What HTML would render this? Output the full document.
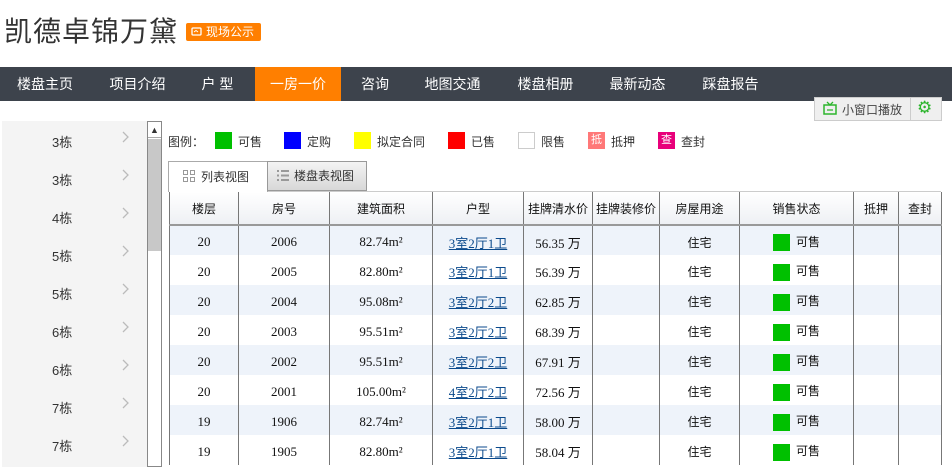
<!DOCTYPE html>
<html><head><meta charset="utf-8"><style>
*{margin:0;padding:0;box-sizing:border-box}
body{width:952px;height:467px;overflow:hidden;background:#fff;font-family:"Liberation Sans","Noto Sans CJK SC",sans-serif;font-size:12px;color:#333;position:relative}
.abs{position:absolute}
.title{left:4px;top:10px;font-size:28px;color:#333;font-family:"Liberation Sans","Noto Sans CJK SC",sans-serif;letter-spacing:1px}
.badge{left:186px;top:23px;width:75px;height:18px;background:#ff7f00;border-radius:2px;color:#fff;font-size:12px;line-height:18px;padding-left:20px}
.nav{left:0;top:67px;width:952px;height:34px;background:#3d434c}
.nav span{position:absolute;top:0;height:34px;line-height:34px;color:#fff;font-size:14px;text-align:center}
.side{left:2px;top:121px;width:145px;height:346px;background:#f4f4f4}
.side div{position:absolute;left:50px;font-size:13px;color:#333}
.side svg{position:absolute;left:120px}
table{position:absolute;left:169px;top:192px;border-collapse:collapse;font-size:12px;color:#111;table-layout:fixed}
td,th{border-left:1px solid #777;border-right:1px solid #777;text-align:center;font-weight:normal;height:30px;padding:3px 0 0 0;white-space:nowrap}
td{font-family:"Liberation Serif","Noto Sans CJK SC",serif;font-size:13px}
td.c{font-family:"Liberation Sans","Noto Sans CJK SC",sans-serif;font-size:12px}
th{height:33px;background:linear-gradient(#fff,#eef0f4);border-bottom:2px solid #999;font-size:12px;padding:0}
tr.a td{background:#eef3fa}
a{color:#0b4a8c;text-decoration:underline}
.g{display:inline-block;width:17px;height:17px;background:#00c000;vertical-align:middle;margin-right:6px}
</style></head><body>
<div class="abs title">凯德卓锦万黛</div>
<div class="abs badge"><svg class="abs" style="left:5px;top:4px" width="11" height="10"><rect x="1" y="1" width="9" height="7" rx="1" fill="none" stroke="#fff" stroke-width="1.3"/><path d="M3 5l2-1.5 2 1.5" stroke="#fff" fill="none"/></svg>现场公示</div>
<div class="abs nav">
<span style="left:0;width:90px">楼盘主页</span>
<span style="left:95px;width:85px">项目介绍</span>
<span style="left:185px;width:65px">户 型</span>
<span style="left:255px;width:86px;background:#ff7f00">一房一价</span>
<span style="left:345px;width:60px">咨询</span>
<span style="left:410px;width:85px">地图交通</span>
<span style="left:503px;width:85px">楼盘相册</span>
<span style="left:595px;width:85px">最新动态</span>
<span style="left:688px;width:85px">踩盘报告</span>
</div>
<div class="abs" style="left:814px;top:97px;width:128px;height:24px;background:#efefef;border:1px solid #ccc"></div>
<div class="abs" style="left:910px;top:97px;width:1px;height:24px;background:#ccc"></div>
<svg class="abs" style="left:823px;top:101px" width="14" height="14"><rect x="1" y="4" width="12" height="9" fill="none" stroke="#2db52d" stroke-width="1.5"/><path d="M4 1l3 3 3-3M4 9h6" stroke="#2db52d" fill="none" stroke-width="1.3"/></svg>
<div class="abs" style="left:842px;top:101px;font-size:12px;color:#444">小窗口播放</div>
<div class="abs" style="left:917px;top:98px;color:#2db52d;font-size:17px">⚙</div>
<div class="abs side">
<div style="top:11px">3栋</div><svg style="top:10px" width="8" height="12"><path d="M1 1l5 5-5 5" stroke="#bbb" fill="none" stroke-width="1.3"/></svg>
<div style="top:49px">3栋</div><svg style="top:48px" width="8" height="12"><path d="M1 1l5 5-5 5" stroke="#bbb" fill="none" stroke-width="1.3"/></svg>
<div style="top:87px">4栋</div><svg style="top:86px" width="8" height="12"><path d="M1 1l5 5-5 5" stroke="#bbb" fill="none" stroke-width="1.3"/></svg>
<div style="top:125px">5栋</div><svg style="top:124px" width="8" height="12"><path d="M1 1l5 5-5 5" stroke="#bbb" fill="none" stroke-width="1.3"/></svg>
<div style="top:163px">5栋</div><svg style="top:162px" width="8" height="12"><path d="M1 1l5 5-5 5" stroke="#bbb" fill="none" stroke-width="1.3"/></svg>
<div style="top:201px">6栋</div><svg style="top:200px" width="8" height="12"><path d="M1 1l5 5-5 5" stroke="#bbb" fill="none" stroke-width="1.3"/></svg>
<div style="top:239px">6栋</div><svg style="top:238px" width="8" height="12"><path d="M1 1l5 5-5 5" stroke="#bbb" fill="none" stroke-width="1.3"/></svg>
<div style="top:277px">7栋</div><svg style="top:276px" width="8" height="12"><path d="M1 1l5 5-5 5" stroke="#bbb" fill="none" stroke-width="1.3"/></svg>
<div style="top:315px">7栋</div><svg style="top:314px" width="8" height="12"><path d="M1 1l5 5-5 5" stroke="#bbb" fill="none" stroke-width="1.3"/></svg>
</div>
<div class="abs" style="left:147px;top:121px;width:15px;height:346px;border:1px solid #888;background:#fff"></div>
<div class="abs" style="left:148px;top:122px;width:13px;height:16px;background:#fff;border-bottom:1px solid #aaa;font-size:9px;text-align:center;line-height:16px">▲</div>
<div class="abs" style="left:148px;top:139px;width:13px;height:112px;background:#c8c8c8"></div>
<div class="abs" style="left:168px;top:133px;font-size:12px">图例：</div>
<div class="abs" style="left:215px;top:132px;width:17px;height:17px;background:#00c000"></div><div class="abs" style="left:238px;top:133px">可售</div>
<div class="abs" style="left:284px;top:132px;width:17px;height:17px;background:#0000ff"></div><div class="abs" style="left:307px;top:133px">定购</div>
<div class="abs" style="left:354px;top:132px;width:17px;height:17px;background:#ffff00"></div><div class="abs" style="left:377px;top:133px">拟定合同</div>
<div class="abs" style="left:448px;top:132px;width:17px;height:17px;background:#ff0000"></div><div class="abs" style="left:471px;top:133px">已售</div>
<div class="abs" style="left:518px;top:132px;width:17px;height:17px;border:1px solid #ccc"></div><div class="abs" style="left:541px;top:133px">限售</div>
<div class="abs" style="left:588px;top:132px;width:17px;height:17px;background:#ff7878;color:#fff;font-size:11px;text-align:center;line-height:17px">抵</div><div class="abs" style="left:611px;top:133px">抵押</div>
<div class="abs" style="left:658px;top:132px;width:17px;height:17px;background:#e8007a;color:#fff;font-size:11px;text-align:center;line-height:17px">查</div><div class="abs" style="left:681px;top:133px">查封</div>
<div class="abs" style="left:168px;top:161px;width:773px;height:31px;border-bottom:1px solid #ccc"></div>
<div class="abs" style="left:168px;top:161px;width:100px;height:31px;border:1px solid #aaa;border-bottom:none;background:#fff;font-size:12px;line-height:30px;padding-left:32px">列表视图</div>
<svg class="abs" style="left:183px;top:170px" width="12" height="12" fill="none" stroke="#999"><rect x="0.5" y="0.5" width="4" height="4"/><rect x="7.5" y="0.5" width="4" height="4"/><rect x="0.5" y="7.5" width="4" height="4"/><rect x="7.5" y="7.5" width="4" height="4"/></svg>
<div class="abs" style="left:267px;top:161px;width:100px;height:30px;border:1px solid #999;background:linear-gradient(#f4f4f4,#d8d8d8);font-size:12px;line-height:29px;padding-left:26px">楼盘表视图</div>
<svg class="abs" style="left:277px;top:170px" width="12" height="11" fill="#999"><rect x="0" y="0" width="2" height="2"/><rect x="4" y="0" width="8" height="2"/><rect x="0" y="4.5" width="2" height="2"/><rect x="4" y="4.5" width="8" height="2"/><rect x="0" y="9" width="2" height="2"/><rect x="4" y="9" width="8" height="2"/></svg>
<table>
<colgroup><col style="width:69px"><col style="width:91px"><col style="width:103px"><col style="width:91px"><col style="width:69px"><col style="width:67px"><col style="width:80px"><col style="width:114px"><col style="width:45px"><col style="width:43px"></colgroup>
<tr><th>楼层</th><th>房号</th><th>建筑面积</th><th>户型</th><th>挂牌清水价</th><th>挂牌装修价</th><th>房屋用途</th><th>销售状态</th><th>抵押</th><th>查封</th></tr>
<tr class="a"><td>20</td><td>2006</td><td>82.74m²</td><td><a>3室2厅1卫</a></td><td>56.35 万</td><td></td><td class="c">住宅</td><td class="c"><span class="g"></span>可售</td><td></td><td></td></tr>
<tr><td>20</td><td>2005</td><td>82.80m²</td><td><a>3室2厅1卫</a></td><td>56.39 万</td><td></td><td class="c">住宅</td><td class="c"><span class="g"></span>可售</td><td></td><td></td></tr>
<tr class="a"><td>20</td><td>2004</td><td>95.08m²</td><td><a>3室2厅2卫</a></td><td>62.85 万</td><td></td><td class="c">住宅</td><td class="c"><span class="g"></span>可售</td><td></td><td></td></tr>
<tr><td>20</td><td>2003</td><td>95.51m²</td><td><a>3室2厅2卫</a></td><td>68.39 万</td><td></td><td class="c">住宅</td><td class="c"><span class="g"></span>可售</td><td></td><td></td></tr>
<tr class="a"><td>20</td><td>2002</td><td>95.51m²</td><td><a>3室2厅2卫</a></td><td>67.91 万</td><td></td><td class="c">住宅</td><td class="c"><span class="g"></span>可售</td><td></td><td></td></tr>
<tr><td>20</td><td>2001</td><td>105.00m²</td><td><a>4室2厅2卫</a></td><td>72.56 万</td><td></td><td class="c">住宅</td><td class="c"><span class="g"></span>可售</td><td></td><td></td></tr>
<tr class="a"><td>19</td><td>1906</td><td>82.74m²</td><td><a>3室2厅1卫</a></td><td>58.00 万</td><td></td><td class="c">住宅</td><td class="c"><span class="g"></span>可售</td><td></td><td></td></tr>
<tr><td>19</td><td>1905</td><td>82.80m²</td><td><a>3室2厅1卫</a></td><td>58.04 万</td><td></td><td class="c">住宅</td><td class="c"><span class="g"></span>可售</td><td></td><td></td></tr>
</table>
</body></html>
